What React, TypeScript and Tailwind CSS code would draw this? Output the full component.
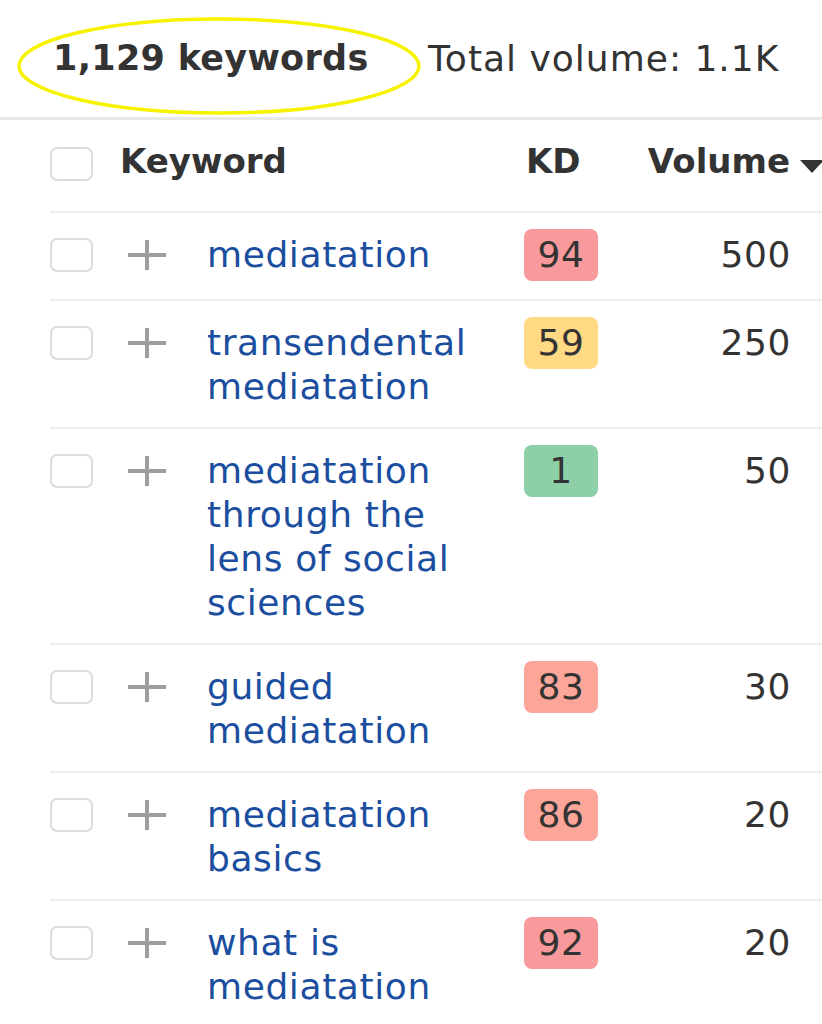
import React from "react"

type Row = { keyword: string; kd: number; kdColor: string; volume: number }

const rows: Row[] = [
  { keyword: "mediatation", kd: 94, kdColor: "bg-[#f89a9b]", volume: 500 },
  { keyword: "transendental mediatation", kd: 59, kdColor: "bg-[#ffd984]", volume: 250 },
  { keyword: "mediatation through the lens of social sciences", kd: 1, kdColor: "bg-[#8dcfa6]", volume: 50 },
  { keyword: "guided mediatation", kd: 83, kdColor: "bg-[#fca69a]", volume: 30 },
  { keyword: "mediatation basics", kd: 86, kdColor: "bg-[#fca69a]", volume: 20 },
  { keyword: "what is mediatation", kd: 92, kdColor: "bg-[#f89a9b]", volume: 20 },
]

function Checkbox() {
  return <div className="w-[43px] h-[34px] rounded-[7px] border-2 border-[#dcdcdc] bg-white" />
}

function Plus() {
  return (
    <svg width="38" height="30" viewBox="0 0 38 30">
      <line x1="0" y1="15" x2="38" y2="15" stroke="#9e9e9e" strokeWidth="4" />
      <line x1="19" y1="0" x2="19" y2="30" stroke="#9e9e9e" strokeWidth="4" />
    </svg>
  )
}

export default function App() {
  return (
    <div className="relative w-[822px] h-[1024px] overflow-hidden bg-white text-[#333] font-['DejaVu_Sans',sans-serif]">
      {/* summary bar */}
      <div className="relative h-[120px] flex items-center pl-[53px] border-b-[3px] border-[#e8e8e8]">
        <span className="text-[35px] font-bold leading-none w-[375px] tracking-[0.3px]">1,129 keywords</span>
        <span className="text-[36px] leading-none tracking-[1px]">Total volume: 1.1K</span>
        <svg className="absolute left-[17px] top-[17px]" width="404" height="98" viewBox="0 0 404 98">
          <ellipse cx="202" cy="49" rx="200" ry="47" fill="none" stroke="#f6f200" strokeWidth="3.5" />
        </svg>
      </div>

      <div className="ml-[50px] w-[790px]">
        {/* header */}
        <div className="flex items-center h-[93px] pb-[9px] border-b-2 border-[#ededed] font-bold text-[34px]">
          <div className="w-[70px] shrink-0 mt-[6px]">
            <Checkbox />
          </div>
          <div className="w-[405px] shrink-0">Keyword</div>
          <div className="w-[74px] shrink-0 pl-[1px]">KD</div>
          <div className="flex-1 flex items-center justify-end gap-[10px] pr-[16px]">
            <span>Volume</span>
            <svg className="mt-[10px]" width="24" height="13" viewBox="0 0 24 13">
              <path d="M0 0 L24 0 L12 13 Z" fill="#333" />
            </svg>
          </div>
        </div>

        {rows.map((r) => (
          <div key={r.keyword} className="flex items-start pt-[20px] pb-[18px] border-b-2 border-[#ededed] text-[36px] leading-[44px] tracking-[0.6px]">
            <div className="w-[78px] shrink-0 mt-[5px]">
              <Checkbox />
            </div>
            <div className="w-[79px] shrink-0 mt-[7px]">
              <Plus />
            </div>
            <div className="w-[317px] shrink-0 pr-[27px] text-[#1b4e9f]">{r.keyword}</div>
            <div className={`w-[74px] h-[52px] shrink-0 -mt-[4px] rounded-[8px] flex items-center justify-center ${r.kdColor}`}>
              {r.kd}
            </div>
            <div className="flex-1 text-right pr-[49px]">{r.volume}</div>
          </div>
        ))}
      </div>
    </div>
  )
}
